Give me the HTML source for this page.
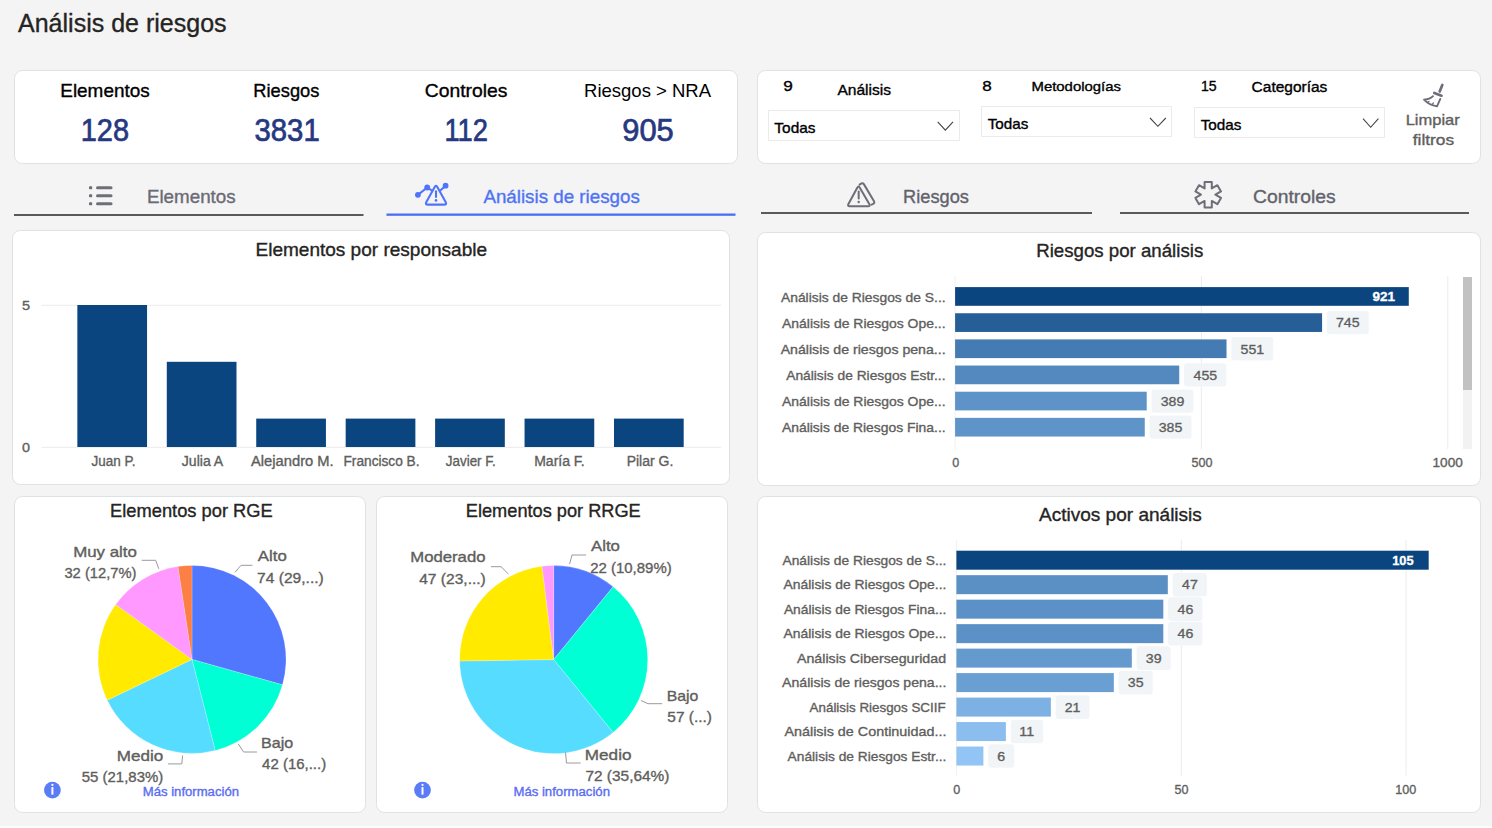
<!DOCTYPE html>
<html><head><meta charset="utf-8"><title>Análisis de riesgos</title>
<style>html,body{margin:0;padding:0;width:1492px;height:828px;overflow:hidden;background:#f4f4f4;font-family:"Liberation Sans", sans-serif}</style>
</head><body>
<svg width="1492" height="828" viewBox="0 0 1492 828" style="position:absolute;left:0;top:0;font-family:'Liberation Sans', sans-serif">
<rect x="0" y="0" width="1492" height="828" fill="#f4f4f4"/>
<text x="18.00" y="31.90" font-size="26" fill="#252423" stroke="#252423" stroke-width="0.35" textLength="208.62" lengthAdjust="spacingAndGlyphs" style="">Análisis de riesgos</text>
<rect x="14.5" y="70.5" width="723" height="93" rx="8" fill="#fff" stroke="#dde3e3" stroke-width="1"/>
<text x="60.29" y="96.70" font-size="18.5" fill="#000" stroke="#000" stroke-width="0.35" textLength="89.37" lengthAdjust="spacingAndGlyphs" style="">Elementos</text>
<text x="80.73" y="141.00" font-size="31" fill="#26387f" stroke="#26387f" stroke-width="0.7" textLength="48.33" lengthAdjust="spacingAndGlyphs" style="">128</text>
<text x="253.34" y="96.70" font-size="18.5" fill="#000" stroke="#000" stroke-width="0.35" textLength="66.06" lengthAdjust="spacingAndGlyphs" style="">Riesgos</text>
<text x="254.53" y="141.00" font-size="31" fill="#26387f" stroke="#26387f" stroke-width="0.7" textLength="65.18" lengthAdjust="spacingAndGlyphs" style="">3831</text>
<text x="424.83" y="96.70" font-size="18.5" fill="#000" stroke="#000" stroke-width="0.35" textLength="82.64" lengthAdjust="spacingAndGlyphs" style="">Controles</text>
<text x="444.45" y="141.00" font-size="31" fill="#26387f" stroke="#26387f" stroke-width="0.7" textLength="43.49" lengthAdjust="spacingAndGlyphs" style="">112</text>
<text x="584.02" y="96.7" font-size="18.5" fill="#000" textLength="127.05" lengthAdjust="spacingAndGlyphs">Riesgos &gt; NRA</text>
<text x="622.21" y="141.00" font-size="31" fill="#26387f" stroke="#26387f" stroke-width="0.7" textLength="51.53" lengthAdjust="spacingAndGlyphs" style="">905</text>
<rect x="757.5" y="70.5" width="723" height="93" rx="8" fill="#fff" stroke="#dde3e3" stroke-width="1"/>
<text x="783.23" y="90.70" font-size="14.5" fill="#000" stroke="#000" stroke-width="0.35" textLength="9.57" lengthAdjust="spacingAndGlyphs" style="">9</text>
<text x="837.40" y="94.90" font-size="15" fill="#000" stroke="#000" stroke-width="0.35" textLength="53.66" lengthAdjust="spacingAndGlyphs" style="">Análisis</text>
<text x="982.23" y="90.70" font-size="14.5" fill="#000" stroke="#000" stroke-width="0.35" textLength="9.47" lengthAdjust="spacingAndGlyphs" style="">8</text>
<text x="1031.51" y="90.70" font-size="13.5" fill="#000" stroke="#000" stroke-width="0.35" textLength="89.40" lengthAdjust="spacingAndGlyphs" style="">Metodologías</text>
<text x="1200.94" y="91.00" font-size="14.5" fill="#000" stroke="#000" stroke-width="0.35" textLength="15.65" lengthAdjust="spacingAndGlyphs" style="">15</text>
<text x="1251.63" y="92.10" font-size="14" fill="#000" stroke="#000" stroke-width="0.35" textLength="75.74" lengthAdjust="spacingAndGlyphs" style="">Categorías</text>
<rect x="768.5" y="110.5" width="191" height="30" fill="#fff" stroke="#ebebeb" stroke-width="1"/>
<text x="774.39" y="132.50" font-size="15" fill="#000" stroke="#000" stroke-width="0.35" textLength="41.12" lengthAdjust="spacingAndGlyphs" style="">Todas</text>
<polyline points="937.7,121.8 945.35,130.2 953,121.8" fill="none" stroke="#444" stroke-width="1.1"/>
<rect x="981.5" y="106.5" width="190" height="30" fill="#fff" stroke="#ebebeb" stroke-width="1"/>
<text x="987.70" y="128.80" font-size="15" fill="#000" stroke="#000" stroke-width="0.35" textLength="40.61" lengthAdjust="spacingAndGlyphs" style="">Todas</text>
<polyline points="1150,118 1157.9,126.3 1165.8,118" fill="none" stroke="#444" stroke-width="1.1"/>
<rect x="1194.5" y="107.5" width="190" height="30" fill="#fff" stroke="#ebebeb" stroke-width="1"/>
<text x="1200.69" y="129.90" font-size="15" fill="#000" stroke="#000" stroke-width="0.35" textLength="40.82" lengthAdjust="spacingAndGlyphs" style="">Todas</text>
<polyline points="1363,118.7 1370.7,127.3 1378.4,118.7" fill="none" stroke="#444" stroke-width="1.1"/>
<text x="1405.68" y="125.30" font-size="15" fill="#605e5c" stroke="#605e5c" stroke-width="0.35" textLength="54.13" lengthAdjust="spacingAndGlyphs" style="">Limpiar</text>
<text x="1412.74" y="144.80" font-size="15" fill="#605e5c" stroke="#605e5c" stroke-width="0.35" textLength="41.35" lengthAdjust="spacingAndGlyphs" style="">filtros</text>
<g stroke="#6e6e78" fill="none" stroke-linecap="round" stroke-linejoin="round"><line x1="1442.3" y1="85" x2="1439.7" y2="91.4" stroke-width="2.7"/><line x1="1434.3" y1="93" x2="1441.5" y2="95.7" stroke-width="2.7"/><path d="M1433 96.2 Q1430 99.5 1424 99.6 Q1429 105 1437 106.4 L1440.3 98.9" stroke-width="1.9"/><path d="M1427.5 102.5 L1429 101.5 M1432 104.5 L1433.5 102.8" stroke-width="1.2"/></g>
<rect x="14" y="214" width="349.5" height="2" fill="#5a5a5a"/>
<rect x="386.5" y="213.5" width="349" height="2.3" fill="#4a6cf7"/>
<rect x="761" y="212" width="331" height="2" fill="#5a5a5a"/>
<rect x="1120" y="212" width="349" height="2" fill="#5a5a5a"/>
<text x="146.90" y="202.90" font-size="18.5" fill="#6b6b75" stroke="#6b6b75" stroke-width="0.35" textLength="88.76" lengthAdjust="spacingAndGlyphs" style="">Elementos</text>
<text x="483.40" y="202.60" font-size="18.5" fill="#4f73f5" stroke="#4f73f5" stroke-width="0.35" textLength="156.41" lengthAdjust="spacingAndGlyphs" style="">Análisis de riesgos</text>
<text x="903.04" y="203.00" font-size="18.5" fill="#62626c" stroke="#62626c" stroke-width="0.35" textLength="65.86" lengthAdjust="spacingAndGlyphs" style="">Riesgos</text>
<text x="1253.03" y="202.90" font-size="18.5" fill="#62626c" stroke="#62626c" stroke-width="0.35" textLength="82.64" lengthAdjust="spacingAndGlyphs" style="">Controles</text>
<g fill="#6e6e78"><rect x="89" y="186.3" width="3.2" height="3" rx="0.8"/><rect x="96" y="186.3" width="16.5" height="3" rx="1.5"/><rect x="89" y="194.2" width="3.2" height="3" rx="0.8"/><rect x="96" y="194.2" width="16.5" height="3" rx="1.5"/><rect x="89" y="202.2" width="3.2" height="3" rx="0.8"/><rect x="96" y="202.2" width="16.5" height="3" rx="1.5"/></g>
<g stroke="#4f74f9" fill="none" stroke-width="2.1" stroke-linecap="round" stroke-linejoin="round"><path d="M417.9 194.8 L427.2 187.5 L431.2 190.2"/><path d="M440.6 190.2 L445.6 185.7"/><path d="M437.46,187.22 Q436.00,184.60 434.54,187.22 L426.36,201.98 Q424.90,204.60 427.90,204.60 L444.10,204.60 Q447.10,204.60 445.64,201.98 Z"/><line x1="436" y1="191.3" x2="436" y2="197"/></g><g fill="#4f74f9"><circle cx="417.9" cy="194.8" r="2.9"/><circle cx="427.2" cy="187.5" r="2.9"/><circle cx="445.6" cy="185.7" r="2.9"/><circle cx="436" cy="200.4" r="1.3"/></g>
<g stroke="#6e6e78" fill="none" stroke-width="2.0" stroke-linecap="round" stroke-linejoin="round"><path d="M859.81,187.65 Q858.50,185.40 857.26,187.68 L848.44,203.92 Q847.20,206.20 849.80,206.20 L868.00,206.20 Q870.60,206.20 869.29,203.95 Z"/><path d="M859.60,184.60 L860.66,183.87 Q862.80,182.40 864.13,184.63 L873.87,200.97 Q875.20,203.20 872.77,204.12 L871.50,204.60"/><line x1="858.7" y1="191.6" x2="858.7" y2="198.6"/></g><circle cx="858.7" cy="202" r="1.2" fill="#6e6e78"/>
<polygon points="1204.60,182.00 1211.80,182.00 1211.80,188.46 1217.40,185.23 1221.00,191.47 1215.40,194.70 1221.00,197.93 1217.40,204.17 1211.80,200.94 1211.80,207.40 1204.60,207.40 1204.60,200.94 1199.00,204.17 1195.40,197.93 1201.00,194.70 1195.40,191.47 1199.00,185.23 1204.60,188.46" fill="none" stroke="#6e6e78" stroke-width="2.0" stroke-linejoin="round"/>
<rect x="12.5" y="230.5" width="717" height="254" rx="8" fill="#fff" stroke="#dde3e3" stroke-width="1"/>
<text x="255.48" y="256.00" font-size="18.5" fill="#252423" stroke="#252423" stroke-width="0.35" textLength="231.57" lengthAdjust="spacingAndGlyphs" style="">Elementos por responsable</text>
<line x1="41.6" y1="305.3" x2="721.3" y2="305.3" stroke="#ececec" stroke-width="1"/>
<line x1="41.6" y1="447.3" x2="721.3" y2="447.3" stroke="#ececec" stroke-width="1"/>
<text x="21.92" y="310.00" font-size="13" fill="#605e5c" stroke="#605e5c" stroke-width="0.35" textLength="8.08" lengthAdjust="spacingAndGlyphs" style="">5</text>
<text x="21.93" y="452.00" font-size="13" fill="#605e5c" stroke="#605e5c" stroke-width="0.35" textLength="7.99" lengthAdjust="spacingAndGlyphs" style="">0</text>
<rect x="77.35" y="305.00" width="69.7" height="142.00" fill="#0a4580"/>
<rect x="166.79" y="361.80" width="69.7" height="85.20" fill="#0a4580"/>
<rect x="256.23" y="418.60" width="69.7" height="28.40" fill="#0a4580"/>
<rect x="345.67" y="418.60" width="69.7" height="28.40" fill="#0a4580"/>
<rect x="435.11" y="418.60" width="69.7" height="28.40" fill="#0a4580"/>
<rect x="524.55" y="418.60" width="69.7" height="28.40" fill="#0a4580"/>
<rect x="613.99" y="418.60" width="69.7" height="28.40" fill="#0a4580"/>
<text x="91.60" y="465.90" font-size="14" fill="#605e5c" stroke="#605e5c" stroke-width="0.35" textLength="43.94" lengthAdjust="spacingAndGlyphs" style="">Juan P.</text>
<text x="181.79" y="465.90" font-size="14" fill="#605e5c" stroke="#605e5c" stroke-width="0.35" textLength="41.43" lengthAdjust="spacingAndGlyphs" style="">Julia A</text>
<text x="251.00" y="465.90" font-size="14" fill="#605e5c" stroke="#605e5c" stroke-width="0.35" textLength="82.68" lengthAdjust="spacingAndGlyphs" style="">Alejandro M.</text>
<text x="343.51" y="465.90" font-size="14" fill="#605e5c" stroke="#605e5c" stroke-width="0.35" textLength="76.06" lengthAdjust="spacingAndGlyphs" style="">Francisco B.</text>
<text x="445.80" y="465.90" font-size="14" fill="#605e5c" stroke="#605e5c" stroke-width="0.35" textLength="49.95" lengthAdjust="spacingAndGlyphs" style="">Javier F.</text>
<text x="534.20" y="465.90" font-size="14" fill="#605e5c" stroke="#605e5c" stroke-width="0.35" textLength="50.57" lengthAdjust="spacingAndGlyphs" style="">María F.</text>
<text x="626.68" y="465.90" font-size="14" fill="#605e5c" stroke="#605e5c" stroke-width="0.35" textLength="46.63" lengthAdjust="spacingAndGlyphs" style="">Pilar G.</text>
<rect x="757.5" y="232.5" width="723" height="253" rx="8" fill="#fff" stroke="#dde3e3" stroke-width="1"/>
<text x="1036.21" y="256.70" font-size="18.5" fill="#252423" stroke="#252423" stroke-width="0.35" textLength="167.03" lengthAdjust="spacingAndGlyphs" style="">Riesgos por análisis</text>
<line x1="955.1" y1="276" x2="955.1" y2="449" stroke="#f0f0f0" stroke-width="1"/>
<line x1="1201.4" y1="276" x2="1201.4" y2="449" stroke="#ececec" stroke-width="1"/>
<line x1="1447.8" y1="276" x2="1447.8" y2="449" stroke="#ececec" stroke-width="1"/>
<rect x="955.1" y="287.10" width="453.68" height="18.7" fill="#0a4580"/>
<text x="781.00" y="301.55" font-size="13.5" fill="#605e5c" stroke="#605e5c" stroke-width="0.35" textLength="164.62" lengthAdjust="spacingAndGlyphs" style="">Análisis de Riesgos de S...</text>
<text x="1372.53" y="301.10" font-size="13.5" fill="#fff" stroke="#fff" stroke-width="0.35" textLength="22.56" lengthAdjust="spacingAndGlyphs" style="font-weight:bold;">921</text>
<rect x="955.1" y="313.25" width="366.99" height="18.7" fill="#265f98"/>
<text x="782.00" y="327.70" font-size="13.5" fill="#605e5c" stroke="#605e5c" stroke-width="0.35" textLength="163.60" lengthAdjust="spacingAndGlyphs" style="">Análisis de Riesgos Ope...</text>
<rect x="1326.89" y="310.95" width="41.83" height="23.30" rx="3" fill="#f2f5f8"/>
<text x="1335.93" y="327.40" font-size="13.5" fill="#605e5c" stroke="#605e5c" stroke-width="0.35" textLength="23.65" lengthAdjust="spacingAndGlyphs" style="">745</text>
<rect x="955.1" y="339.40" width="271.42" height="18.7" fill="#447bb2"/>
<text x="780.70" y="353.85" font-size="13.5" fill="#605e5c" stroke="#605e5c" stroke-width="0.35" textLength="164.92" lengthAdjust="spacingAndGlyphs" style="">Análisis de riesgos pena...</text>
<rect x="1231.32" y="337.10" width="41.90" height="23.30" rx="3" fill="#f2f5f8"/>
<text x="1240.51" y="353.55" font-size="13.5" fill="#605e5c" stroke="#605e5c" stroke-width="0.35" textLength="23.65" lengthAdjust="spacingAndGlyphs" style="">551</text>
<rect x="955.1" y="365.55" width="224.13" height="18.7" fill="#5389bf"/>
<text x="786.20" y="380.00" font-size="13.5" fill="#605e5c" stroke="#605e5c" stroke-width="0.35" textLength="159.35" lengthAdjust="spacingAndGlyphs" style="">Análisis de Riesgos Estr...</text>
<rect x="1184.03" y="363.25" width="42.25" height="23.30" rx="3" fill="#f2f5f8"/>
<text x="1193.50" y="379.70" font-size="13.5" fill="#605e5c" stroke="#605e5c" stroke-width="0.35" textLength="23.65" lengthAdjust="spacingAndGlyphs" style="">455</text>
<rect x="955.1" y="391.70" width="191.62" height="18.7" fill="#5d93c8"/>
<text x="782.00" y="406.15" font-size="13.5" fill="#605e5c" stroke="#605e5c" stroke-width="0.35" textLength="163.60" lengthAdjust="spacingAndGlyphs" style="">Análisis de Riesgos Ope...</text>
<rect x="1151.52" y="389.40" width="41.90" height="23.30" rx="3" fill="#f2f5f8"/>
<text x="1160.70" y="405.85" font-size="13.5" fill="#605e5c" stroke="#605e5c" stroke-width="0.35" textLength="23.65" lengthAdjust="spacingAndGlyphs" style="">389</text>
<rect x="955.1" y="417.85" width="189.65" height="18.7" fill="#5e94c8"/>
<text x="782.00" y="432.30" font-size="13.5" fill="#605e5c" stroke="#605e5c" stroke-width="0.35" textLength="163.60" lengthAdjust="spacingAndGlyphs" style="">Análisis de Riesgos Fina...</text>
<rect x="1149.55" y="415.55" width="41.97" height="23.30" rx="3" fill="#f2f5f8"/>
<text x="1158.73" y="432.00" font-size="13.5" fill="#605e5c" stroke="#605e5c" stroke-width="0.35" textLength="23.65" lengthAdjust="spacingAndGlyphs" style="">385</text>
<text x="952.18" y="466.70" font-size="13.5" fill="#605e5c" stroke="#605e5c" stroke-width="0.35" textLength="6.98" lengthAdjust="spacingAndGlyphs" style="">0</text>
<text x="1191.52" y="466.70" font-size="13.5" fill="#605e5c" stroke="#605e5c" stroke-width="0.35" textLength="20.95" lengthAdjust="spacingAndGlyphs" style="">500</text>
<text x="1432.58" y="466.70" font-size="13.5" fill="#605e5c" stroke="#605e5c" stroke-width="0.35" textLength="30.19" lengthAdjust="spacingAndGlyphs" style="">1000</text>
<rect x="1463" y="277" width="9" height="172" fill="#f2f2f2"/>
<rect x="1463" y="277" width="9" height="113" fill="#c2c2c2"/>
<rect x="757.5" y="496.5" width="723" height="316" rx="8" fill="#fff" stroke="#dde3e3" stroke-width="1"/>
<text x="1039.00" y="520.80" font-size="18.5" fill="#252423" stroke="#252423" stroke-width="0.35" textLength="162.85" lengthAdjust="spacingAndGlyphs" style="">Activos por análisis</text>
<line x1="956.4" y1="540" x2="956.4" y2="775.5" stroke="#f0f0f0" stroke-width="1"/>
<line x1="1181.3" y1="540" x2="1181.3" y2="775.5" stroke="#ececec" stroke-width="1"/>
<line x1="1406" y1="540" x2="1406" y2="775.5" stroke="#ececec" stroke-width="1"/>
<rect x="956.4" y="550.70" width="472.29" height="19" fill="#0a4580"/>
<text x="782.50" y="564.90" font-size="13.5" fill="#605e5c" stroke="#605e5c" stroke-width="0.35" textLength="163.91" lengthAdjust="spacingAndGlyphs" style="">Análisis de Riesgos de S...</text>
<text x="1392.23" y="565.00" font-size="13.5" fill="#fff" stroke="#fff" stroke-width="0.35" textLength="21.44" lengthAdjust="spacingAndGlyphs" style="font-weight:bold;">105</text>
<rect x="956.4" y="575.18" width="211.41" height="19" fill="#5a90c4"/>
<text x="783.50" y="589.38" font-size="13.5" fill="#605e5c" stroke="#605e5c" stroke-width="0.35" textLength="162.89" lengthAdjust="spacingAndGlyphs" style="">Análisis de Riesgos Ope...</text>
<rect x="1172.61" y="572.88" width="34.24" height="23.60" rx="3" fill="#f2f5f8"/>
<text x="1182.07" y="589.48" font-size="13.5" fill="#605e5c" stroke="#605e5c" stroke-width="0.35" textLength="15.77" lengthAdjust="spacingAndGlyphs" style="">47</text>
<rect x="956.4" y="599.66" width="206.91" height="19" fill="#5b91c6"/>
<text x="783.90" y="613.86" font-size="13.5" fill="#605e5c" stroke="#605e5c" stroke-width="0.35" textLength="162.49" lengthAdjust="spacingAndGlyphs" style="">Análisis de Riesgos Fina...</text>
<rect x="1168.11" y="597.36" width="34.38" height="23.60" rx="3" fill="#f2f5f8"/>
<text x="1177.57" y="613.96" font-size="13.5" fill="#605e5c" stroke="#605e5c" stroke-width="0.35" textLength="15.77" lengthAdjust="spacingAndGlyphs" style="">46</text>
<rect x="956.4" y="624.14" width="206.91" height="19" fill="#5b91c6"/>
<text x="783.50" y="638.34" font-size="13.5" fill="#605e5c" stroke="#605e5c" stroke-width="0.35" textLength="162.89" lengthAdjust="spacingAndGlyphs" style="">Análisis de Riesgos Ope...</text>
<rect x="1168.11" y="621.84" width="34.38" height="23.60" rx="3" fill="#f2f5f8"/>
<text x="1177.57" y="638.44" font-size="13.5" fill="#605e5c" stroke="#605e5c" stroke-width="0.35" textLength="15.77" lengthAdjust="spacingAndGlyphs" style="">46</text>
<rect x="956.4" y="648.62" width="175.42" height="19" fill="#659ace"/>
<text x="797.00" y="662.82" font-size="13.5" fill="#605e5c" stroke="#605e5c" stroke-width="0.35" textLength="149.03" lengthAdjust="spacingAndGlyphs" style="">Análisis Ciberseguridad</text>
<rect x="1136.62" y="646.32" width="34.03" height="23.60" rx="3" fill="#f2f5f8"/>
<text x="1145.80" y="662.92" font-size="13.5" fill="#605e5c" stroke="#605e5c" stroke-width="0.35" textLength="15.77" lengthAdjust="spacingAndGlyphs" style="">39</text>
<rect x="956.4" y="673.10" width="157.43" height="19" fill="#6a9fd3"/>
<text x="782.10" y="687.30" font-size="13.5" fill="#605e5c" stroke="#605e5c" stroke-width="0.35" textLength="164.32" lengthAdjust="spacingAndGlyphs" style="">Análisis de riesgos pena...</text>
<rect x="1118.63" y="670.80" width="34.10" height="23.60" rx="3" fill="#f2f5f8"/>
<text x="1127.81" y="687.40" font-size="13.5" fill="#605e5c" stroke="#605e5c" stroke-width="0.35" textLength="15.77" lengthAdjust="spacingAndGlyphs" style="">35</text>
<rect x="956.4" y="697.58" width="94.46" height="19" fill="#7db1e3"/>
<text x="809.60" y="711.78" font-size="13.5" fill="#605e5c" stroke="#605e5c" stroke-width="0.35" textLength="136.04" lengthAdjust="spacingAndGlyphs" style="">Análisis Riesgos SCIIF</text>
<rect x="1055.66" y="695.28" width="33.89" height="23.60" rx="3" fill="#f2f5f8"/>
<text x="1064.70" y="711.88" font-size="13.5" fill="#605e5c" stroke="#605e5c" stroke-width="0.35" textLength="15.77" lengthAdjust="spacingAndGlyphs" style="">21</text>
<rect x="956.4" y="722.06" width="49.48" height="19" fill="#8bbeef"/>
<text x="784.40" y="736.26" font-size="13.5" fill="#605e5c" stroke="#605e5c" stroke-width="0.35" textLength="162.06" lengthAdjust="spacingAndGlyphs" style="">Análisis de Continuidad...</text>
<rect x="1010.68" y="719.76" width="32.47" height="23.60" rx="3" fill="#f2f5f8"/>
<text x="1019.36" y="736.36" font-size="13.5" fill="#605e5c" stroke="#605e5c" stroke-width="0.35" textLength="14.72" lengthAdjust="spacingAndGlyphs" style="">11</text>
<rect x="956.4" y="746.54" width="26.99" height="19" fill="#92c4f5"/>
<text x="787.60" y="760.74" font-size="13.5" fill="#605e5c" stroke="#605e5c" stroke-width="0.35" textLength="158.75" lengthAdjust="spacingAndGlyphs" style="">Análisis de Riesgos Estr...</text>
<rect x="988.19" y="744.24" width="26.09" height="23.60" rx="3" fill="#f2f5f8"/>
<text x="997.23" y="760.84" font-size="13.5" fill="#605e5c" stroke="#605e5c" stroke-width="0.35" textLength="7.88" lengthAdjust="spacingAndGlyphs" style="">6</text>
<text x="953.18" y="794.00" font-size="13.5" fill="#605e5c" stroke="#605e5c" stroke-width="0.35" textLength="6.98" lengthAdjust="spacingAndGlyphs" style="">0</text>
<text x="1174.50" y="794.00" font-size="13.5" fill="#605e5c" stroke="#605e5c" stroke-width="0.35" textLength="13.97" lengthAdjust="spacingAndGlyphs" style="">50</text>
<text x="1395.30" y="794.00" font-size="13.5" fill="#605e5c" stroke="#605e5c" stroke-width="0.35" textLength="20.95" lengthAdjust="spacingAndGlyphs" style="">100</text>
<rect x="14.5" y="496.5" width="351" height="316" rx="8" fill="#fff" stroke="#dde3e3" stroke-width="1"/>
<text x="110.04" y="516.80" font-size="18.5" fill="#252423" stroke="#252423" stroke-width="0.35" textLength="162.75" lengthAdjust="spacingAndGlyphs" style="">Elementos por RGE</text>
<path d="M192,659.4 L192.00,565.40 A94,94 0 0 1 282.49,684.86 Z" fill="#5177ff" stroke="#fff" stroke-width="0.2"/>
<path d="M192,659.4 L282.49,684.86 A94,94 0 0 1 215.20,750.49 Z" fill="#00ffd4" stroke="#fff" stroke-width="0.2"/>
<path d="M192,659.4 L215.20,750.49 A94,94 0 0 1 107.31,700.19 Z" fill="#55dcff" stroke="#fff" stroke-width="0.2"/>
<path d="M192,659.4 L107.31,700.19 A94,94 0 0 1 115.68,604.53 Z" fill="#ffea00" stroke="#fff" stroke-width="0.2"/>
<path d="M192,659.4 L115.68,604.53 A94,94 0 0 1 177.99,566.45 Z" fill="#ff98ff" stroke="#fff" stroke-width="0.2"/>
<path d="M192,659.4 L177.99,566.45 A94,94 0 0 1 192.00,565.40 Z" fill="#fc7f46" stroke="#fff" stroke-width="0.2"/>
<polyline points="141.7,560.3 155.7,560.3 158.8,568.8" fill="none" stroke="#9a9a9a" stroke-width="1"/>
<text x="73.15" y="556.70" font-size="15" fill="#605e5c" stroke="#605e5c" stroke-width="0.35" textLength="63.82" lengthAdjust="spacingAndGlyphs" style="">Muy alto</text>
<text x="64.41" y="577.60" font-size="15" fill="#605e5c" stroke="#605e5c" stroke-width="0.35" textLength="72.10" lengthAdjust="spacingAndGlyphs" style="">32 (12,7%)</text>
<polyline points="235,572.3 241,565.3 252.4,565.3" fill="none" stroke="#9a9a9a" stroke-width="1"/>
<text x="257.80" y="561.10" font-size="15" fill="#605e5c" stroke="#605e5c" stroke-width="0.35" textLength="28.93" lengthAdjust="spacingAndGlyphs" style="">Alto</text>
<text x="257.02" y="582.90" font-size="15" fill="#605e5c" stroke="#605e5c" stroke-width="0.35" textLength="66.79" lengthAdjust="spacingAndGlyphs" style="">74 (29,...)</text>
<polyline points="238.2,743.8 243.6,752 257,752" fill="none" stroke="#9a9a9a" stroke-width="1"/>
<text x="261.11" y="748.00" font-size="15" fill="#605e5c" stroke="#605e5c" stroke-width="0.35" textLength="32.15" lengthAdjust="spacingAndGlyphs" style="">Bajo</text>
<text x="262.10" y="768.60" font-size="15" fill="#605e5c" stroke="#605e5c" stroke-width="0.35" textLength="64.07" lengthAdjust="spacingAndGlyphs" style="">42 (16,...)</text>
<polyline points="182.6,755.4 181.8,763.9 168,763.9" fill="none" stroke="#9a9a9a" stroke-width="1"/>
<text x="116.84" y="760.80" font-size="15" fill="#605e5c" stroke="#605e5c" stroke-width="0.35" textLength="46.42" lengthAdjust="spacingAndGlyphs" style="">Medio</text>
<text x="81.80" y="781.60" font-size="15" fill="#605e5c" stroke="#605e5c" stroke-width="0.35" textLength="81.44" lengthAdjust="spacingAndGlyphs" style="">55 (21,83%)</text>
<circle cx="52.4" cy="790.1" r="8.4" fill="#5b7cf7"/><rect x="51.4" y="787.1" width="2" height="7.5" fill="#fff"/><circle cx="52.4" cy="784.9" r="1.1" fill="#fff"/>
<text x="142.75" y="795.50" font-size="12.5" fill="#5a6cf2" stroke="#5a6cf2" stroke-width="0.35" textLength="96.22" lengthAdjust="spacingAndGlyphs" style="">Más información</text>
<rect x="376.5" y="496.5" width="351" height="316" rx="8" fill="#fff" stroke="#dde3e3" stroke-width="1"/>
<text x="465.84" y="516.80" font-size="18.5" fill="#252423" stroke="#252423" stroke-width="0.35" textLength="174.88" lengthAdjust="spacingAndGlyphs" style="">Elementos por RRGE</text>
<path d="M553.7,659.6 L553.70,565.60 A94,94 0 0 1 613.12,586.76 Z" fill="#5177ff" stroke="#fff" stroke-width="0.2"/>
<path d="M553.7,659.6 L613.12,586.76 A94,94 0 0 1 613.12,732.44 Z" fill="#00ffd4" stroke="#fff" stroke-width="0.2"/>
<path d="M553.7,659.6 L613.12,732.44 A94,94 0 0 1 459.71,661.06 Z" fill="#55dcff" stroke="#fff" stroke-width="0.2"/>
<path d="M553.7,659.6 L459.71,661.06 A94,94 0 0 1 542.03,566.33 Z" fill="#ffea00" stroke="#fff" stroke-width="0.2"/>
<path d="M553.7,659.6 L542.03,566.33 A94,94 0 0 1 553.70,565.60 Z" fill="#ff98ff" stroke="#fff" stroke-width="0.2"/>
<polyline points="491,566.7 501,566.7 508.4,574" fill="none" stroke="#9a9a9a" stroke-width="1"/>
<text x="410.26" y="562.30" font-size="15" fill="#605e5c" stroke="#605e5c" stroke-width="0.35" textLength="75.26" lengthAdjust="spacingAndGlyphs" style="">Moderado</text>
<text x="419.19" y="584.00" font-size="15" fill="#605e5c" stroke="#605e5c" stroke-width="0.35" textLength="66.62" lengthAdjust="spacingAndGlyphs" style="">47 (23,...)</text>
<polyline points="569.6,564 572,555 586,555" fill="none" stroke="#9a9a9a" stroke-width="1"/>
<text x="591.00" y="551.40" font-size="15" fill="#605e5c" stroke="#605e5c" stroke-width="0.35" textLength="28.93" lengthAdjust="spacingAndGlyphs" style="">Alto</text>
<text x="590.25" y="573.00" font-size="15" fill="#605e5c" stroke="#605e5c" stroke-width="0.35" textLength="81.39" lengthAdjust="spacingAndGlyphs" style="">22 (10,89%)</text>
<polyline points="640.9,700.5 648,703.7 662.2,703.7" fill="none" stroke="#9a9a9a" stroke-width="1"/>
<text x="666.74" y="700.50" font-size="15" fill="#605e5c" stroke="#605e5c" stroke-width="0.35" textLength="31.62" lengthAdjust="spacingAndGlyphs" style="">Bajo</text>
<text x="667.38" y="722.20" font-size="15" fill="#605e5c" stroke="#605e5c" stroke-width="0.35" textLength="44.62" lengthAdjust="spacingAndGlyphs" style="">57 (...)</text>
<polyline points="565.5,752.4 566.5,763 580.6,763" fill="none" stroke="#9a9a9a" stroke-width="1"/>
<text x="584.83" y="760.20" font-size="15" fill="#605e5c" stroke="#605e5c" stroke-width="0.35" textLength="46.63" lengthAdjust="spacingAndGlyphs" style="">Medio</text>
<text x="585.43" y="781.30" font-size="15" fill="#605e5c" stroke="#605e5c" stroke-width="0.35" textLength="84.04" lengthAdjust="spacingAndGlyphs" style="">72 (35,64%)</text>
<circle cx="422.5" cy="790.1" r="8.4" fill="#5b7cf7"/><rect x="421.5" y="787.1" width="2" height="7.5" fill="#fff"/><circle cx="422.5" cy="784.9" r="1.1" fill="#fff"/>
<text x="513.45" y="795.70" font-size="12.5" fill="#5a6cf2" stroke="#5a6cf2" stroke-width="0.35" textLength="96.52" lengthAdjust="spacingAndGlyphs" style="">Más información</text>
<rect x="0" y="826" width="1492" height="2" fill="#fdfdfd"/>
</svg>
</body></html>
